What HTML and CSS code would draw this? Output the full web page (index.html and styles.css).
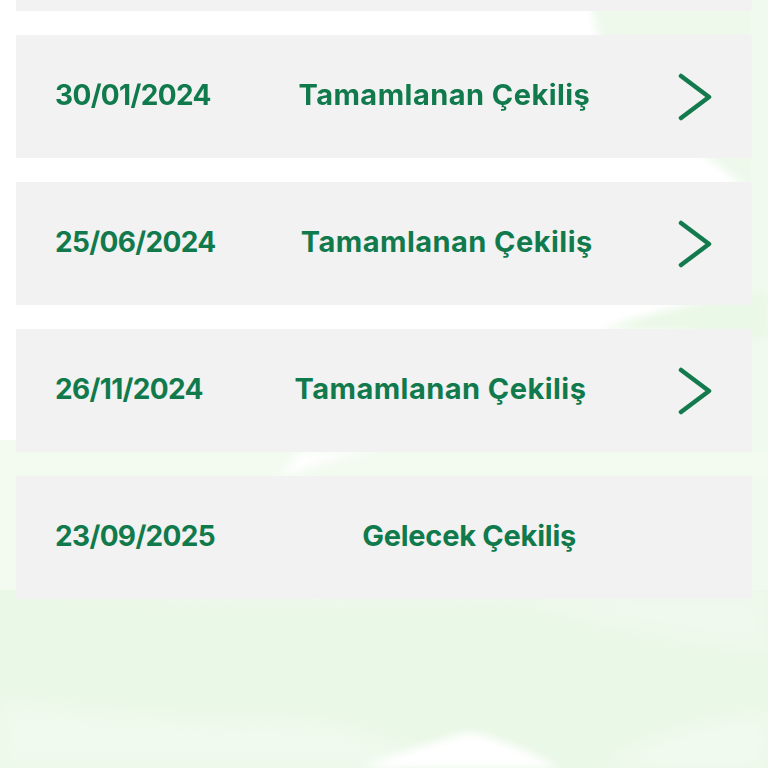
FILE: index.html
```html
<!DOCTYPE html>
<html lang="tr">
<head>
<meta charset="utf-8">
<title>Çekilişler</title>
<link rel="stylesheet" href="styles.css">
</head>
<body>
<svg class="backdrop" viewBox="0 0 768 768" preserveAspectRatio="none" aria-hidden="true">
  <defs>
    <filter id="soft" x="-20%" y="-20%" width="140%" height="140%"><feGaussianBlur stdDeviation="10"/></filter>
    <filter id="softer" x="-20%" y="-20%" width="140%" height="140%"><feGaussianBlur stdDeviation="4"/></filter>
  </defs>
  <rect width="768" height="768" fill="#ffffff"/>
  <path d="M590 0 L768 0 L768 120 Q700 70 600 45 Z" fill="#eef9ec" filter="url(#softer)"/>
  <path d="M680 140 Q730 170 768 210 L768 130 Q730 140 680 140 Z" fill="#eef9ec" filter="url(#softer)"/>
  <rect x="750" y="0" width="18" height="620" fill="#f1faef"/>
  <rect x="0" y="440" width="18" height="160" fill="#f3fbf1"/>
  <path d="M600 330 Q690 300 768 290 L768 340 Q690 330 600 330 Z" fill="#eaf8e7" filter="url(#softer)"/>
  <path d="M0 452 L768 452 L768 478 L0 478 Z" fill="#f3fbf1"/>
  <path d="M280 478 Q330 455 380 452 L300 452 Z" fill="#ffffff" filter="url(#softer)"/>
  <path d="M0 590 L768 590 L768 768 L0 768 Z" fill="#eaf8e7"/>
  <path d="M0 590 Q250 610 520 600 Q650 640 768 650 L768 590 Z" fill="#eff9ed" filter="url(#soft)"/>
  <path d="M0 700 Q150 720 250 720 Q350 715 420 760 L420 768 L0 768 Z" fill="#f0faee" filter="url(#soft)"/>
  <path d="M600 768 Q680 720 768 715 L768 768 Z" fill="#f1faef" filter="url(#soft)"/>
  <path d="M360 768 Q420 745 470 732 Q520 745 560 768 Z" fill="#ffffff" filter="url(#softer)"/>
</svg>

<main class="list">
  <div class="row row--clipped"></div>
  <a class="row" href="#">
    <span class="date">30/01/2024</span>
    <span class="status">Tamamlanan Çekiliş</span>
    <svg class="chev" viewBox="0 0 34 48"><path d="M3 3 L31 24 L3 45"/></svg>
  </a>
  <a class="row" href="#">
    <span class="date">25/06/2024</span>
    <span class="status">Tamamlanan Çekiliş</span>
    <svg class="chev" viewBox="0 0 34 48"><path d="M3 3 L31 24 L3 45"/></svg>
  </a>
  <a class="row" href="#">
    <span class="date">26/11/2024</span>
    <span class="status">Tamamlanan Çekiliş</span>
    <svg class="chev" viewBox="0 0 34 48"><path d="M3 3 L31 24 L3 45"/></svg>
  </a>
  <div class="row row--upcoming">
    <span class="date">23/09/2025</span>
    <span class="status">Gelecek Çekiliş</span>
  </div>
</main>
</body>
</html>
```

FILE: styles.css
```css
html, body {
  margin: 0;
  padding: 0;
  height: 768px;
  overflow: hidden;
}

body {
  font-family: Inter, "Noto Sans", sans-serif;
  color: #117a4d;
  position: relative;
}

.backdrop {
  position: fixed;
  inset: 0;
  width: 768px;
  height: 768px;
  z-index: -1;
}

.list {
  display: flex;
  flex-direction: column;
  gap: 24px;
  padding: 0 16px;
  margin-top: -112px;
}

.row {
  display: flex;
  align-items: center;
  justify-content: space-between;
  height: 123px;
  padding: 0 40px 0 39px;
  background: #f2f2f2;
  text-decoration: none;
  color: inherit;
}

.date,
.status {
  font-weight: 700;
  line-height: 1;
  margin-bottom: 4px;
}

.date {
  font-size: 28px;
  letter-spacing: -0.65px;
}

.status {
  font-size: 29px;
  letter-spacing: 0.45px;
}

.chev {
  width: 34px;
  height: 48px;
  fill: none;
  stroke: #137a4e;
  stroke-width: 4.5;
  stroke-linecap: round;
  stroke-linejoin: round;
}

.row--upcoming .status {
  margin-right: 136px;
  letter-spacing: -0.25px;
}
```
